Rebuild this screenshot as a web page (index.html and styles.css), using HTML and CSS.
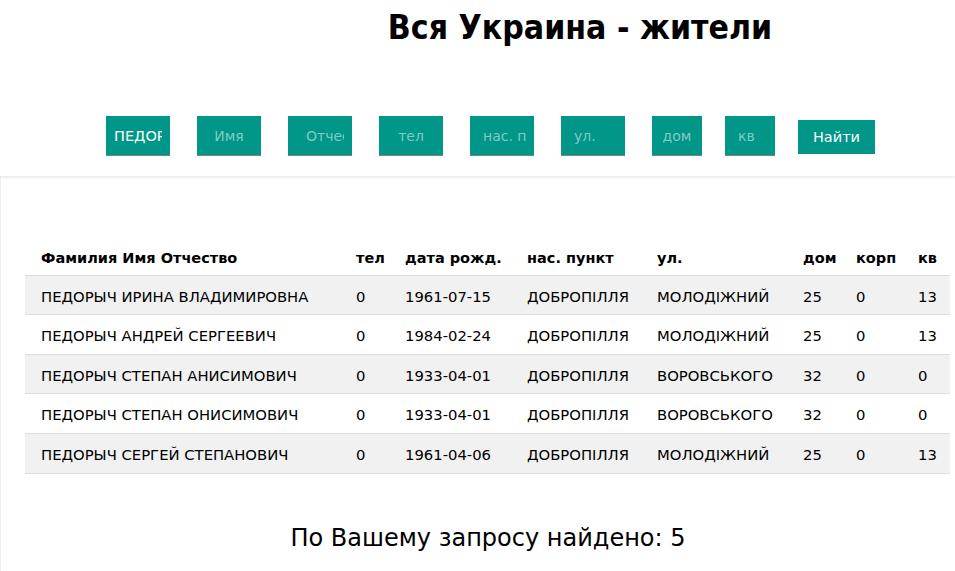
FILE: index.html
```html
<!DOCTYPE html>
<html lang="ru">
<head>
<meta charset="utf-8">
<title>Вся Украина - жители</title>
<link rel="stylesheet" href="styles.css">
</head>
<body>
<header class="top">
  <h1 class="title">Вся Украина - жители</h1>
  <form class="search">
    <input class="field w64 value" type="text" value="ПЕДОРЫЧ">
    <input class="field w64" type="text" placeholder="Имя">
    <input class="field w64 left wide-pad" type="text" placeholder="Отчество">
    <input class="field w64" type="text" placeholder="тел">
    <input class="field w64 left" type="text" placeholder="нас. пункт">
    <input class="field w64 left" type="text" placeholder="ул.">
    <input class="field w50" type="text" placeholder="дом">
    <input class="field w50 left" type="text" placeholder="кв">
    <button class="btn" type="button">Найти</button>
  </form>
</header>
<main class="content">
  <table class="grid">
    <colgroup>
      <col class="c-name"><col class="c-tel"><col class="c-date"><col class="c-city"><col class="c-street"><col class="c-house"><col class="c-korp"><col class="c-kv">
    </colgroup>
    <thead>
      <tr><th>Фамилия Имя Отчество</th><th>тел</th><th>дата рожд.</th><th>нас. пункт</th><th>ул.</th><th>дом</th><th>корп</th><th>кв</th></tr>
    </thead>
    <tbody>
      <tr><td>ПЕДОРЫЧ ИРИНА ВЛАДИМИРОВНА</td><td>0</td><td>1961-07-15</td><td>ДОБРОПІЛЛЯ</td><td>МОЛОДІЖНИЙ</td><td>25</td><td>0</td><td>13</td></tr>
      <tr><td>ПЕДОРЫЧ АНДРЕЙ СЕРГЕЕВИЧ</td><td>0</td><td>1984-02-24</td><td>ДОБРОПІЛЛЯ</td><td>МОЛОДІЖНИЙ</td><td>25</td><td>0</td><td>13</td></tr>
      <tr><td>ПЕДОРЫЧ СТЕПАН АНИСИМОВИЧ</td><td>0</td><td>1933-04-01</td><td>ДОБРОПІЛЛЯ</td><td>ВОРОВСЬКОГО</td><td>32</td><td>0</td><td>0</td></tr>
      <tr><td>ПЕДОРЫЧ СТЕПАН ОНИСИМОВИЧ</td><td>0</td><td>1933-04-01</td><td>ДОБРОПІЛЛЯ</td><td>ВОРОВСЬКОГО</td><td>32</td><td>0</td><td>0</td></tr>
      <tr><td>ПЕДОРЫЧ СЕРГЕЙ СТЕПАНОВИЧ</td><td>0</td><td>1961-04-06</td><td>ДОБРОПІЛЛЯ</td><td>МОЛОДІЖНИЙ</td><td>25</td><td>0</td><td>13</td></tr>
    </tbody>
  </table>
  <p class="found">По Вашему запросу найдено: 5</p>
</main>
</body>
</html>
```
FILE: styles.css
```css
html, body {
  margin: 0;
  padding: 0;
  background: #fff;
  color: #000;
  font-family: "DejaVu Sans", Verdana, sans-serif;
}
.top {
  height: 176px;
  box-shadow: 0 1px 3px rgba(0,0,0,0.12);
  position: relative;
  z-index: 1;
  display: flex;
  flex-direction: column;
}
.title {
  margin: 0;
  padding: 8px 0 0 205px;
  text-align: center;
  font-family: "DejaVu Sans Condensed", "DejaVu Sans", sans-serif;
  font-weight: bold;
  font-size: 33.5px;
  line-height: 40px;
}
.search {
  margin: 68px 0 0 106px;
  display: flex;
  align-items: flex-start;
}
.field {
  box-sizing: border-box;
  height: 40px;
  margin: 0 27px 0 0;
  padding: 0 8px;
  border: none;
  border-bottom: 1px solid #808080;
  background: #009688;
  color: #fff;
  font-family: "DejaVu Sans", Verdana, sans-serif;
  font-size: 14px;
  text-align: center;
  outline: none;
}
.field.value { text-align: left; font-size: 14.5px; }
.field.left { text-align: left; padding-left: 13px; }
.field.wide-pad { padding-left: 18px; }
.field::placeholder { color: #80cbc4; opacity: 1; }
.w64 { width: 64px; }
.w50 { width: 50px; margin-right: 23px; }
.btn {
  box-sizing: border-box;
  width: 77px;
  height: 34px;
  margin-top: 4px;
  border: none;
  background: #009688;
  color: #fff;
  font-family: "DejaVu Sans", Verdana, sans-serif;
  font-weight: normal;
  font-size: 14.5px;
  padding: 0;
}
.content {
  padding: 62px 5px 0 25px;
  border-left: 1px solid #eee;
  min-height: calc(100vh - 238px);
}
.grid {
  width: 925px;
  border-collapse: collapse;
  table-layout: fixed;
  font-size: 14.8px;
  margin-left: -1px;
}
.grid th, .grid td {
  padding: 10px 0 6px 16px;
  line-height: 22.6px;
  text-align: left;
  white-space: nowrap;
  border-bottom: 1px solid #ddd;
}
.grid th {
  font-weight: bold;
  font-size: 14.5px;
  padding: 9px 0 5px 16px;
}
.grid tbody tr:nth-child(odd) { background: #f1f1f1; }
.c-name { width: 315px; }
.c-tel { width: 49px; }
.c-date { width: 122px; }
.c-city { width: 130px; }
.c-street { width: 146px; }
.c-house { width: 53px; }
.c-korp { width: 62px; }
.c-kv { width: 48px; }
.found {
  margin: 48px 0 0;
  text-align: center;
  font-size: 24px;
  line-height: 32px;
}
```
